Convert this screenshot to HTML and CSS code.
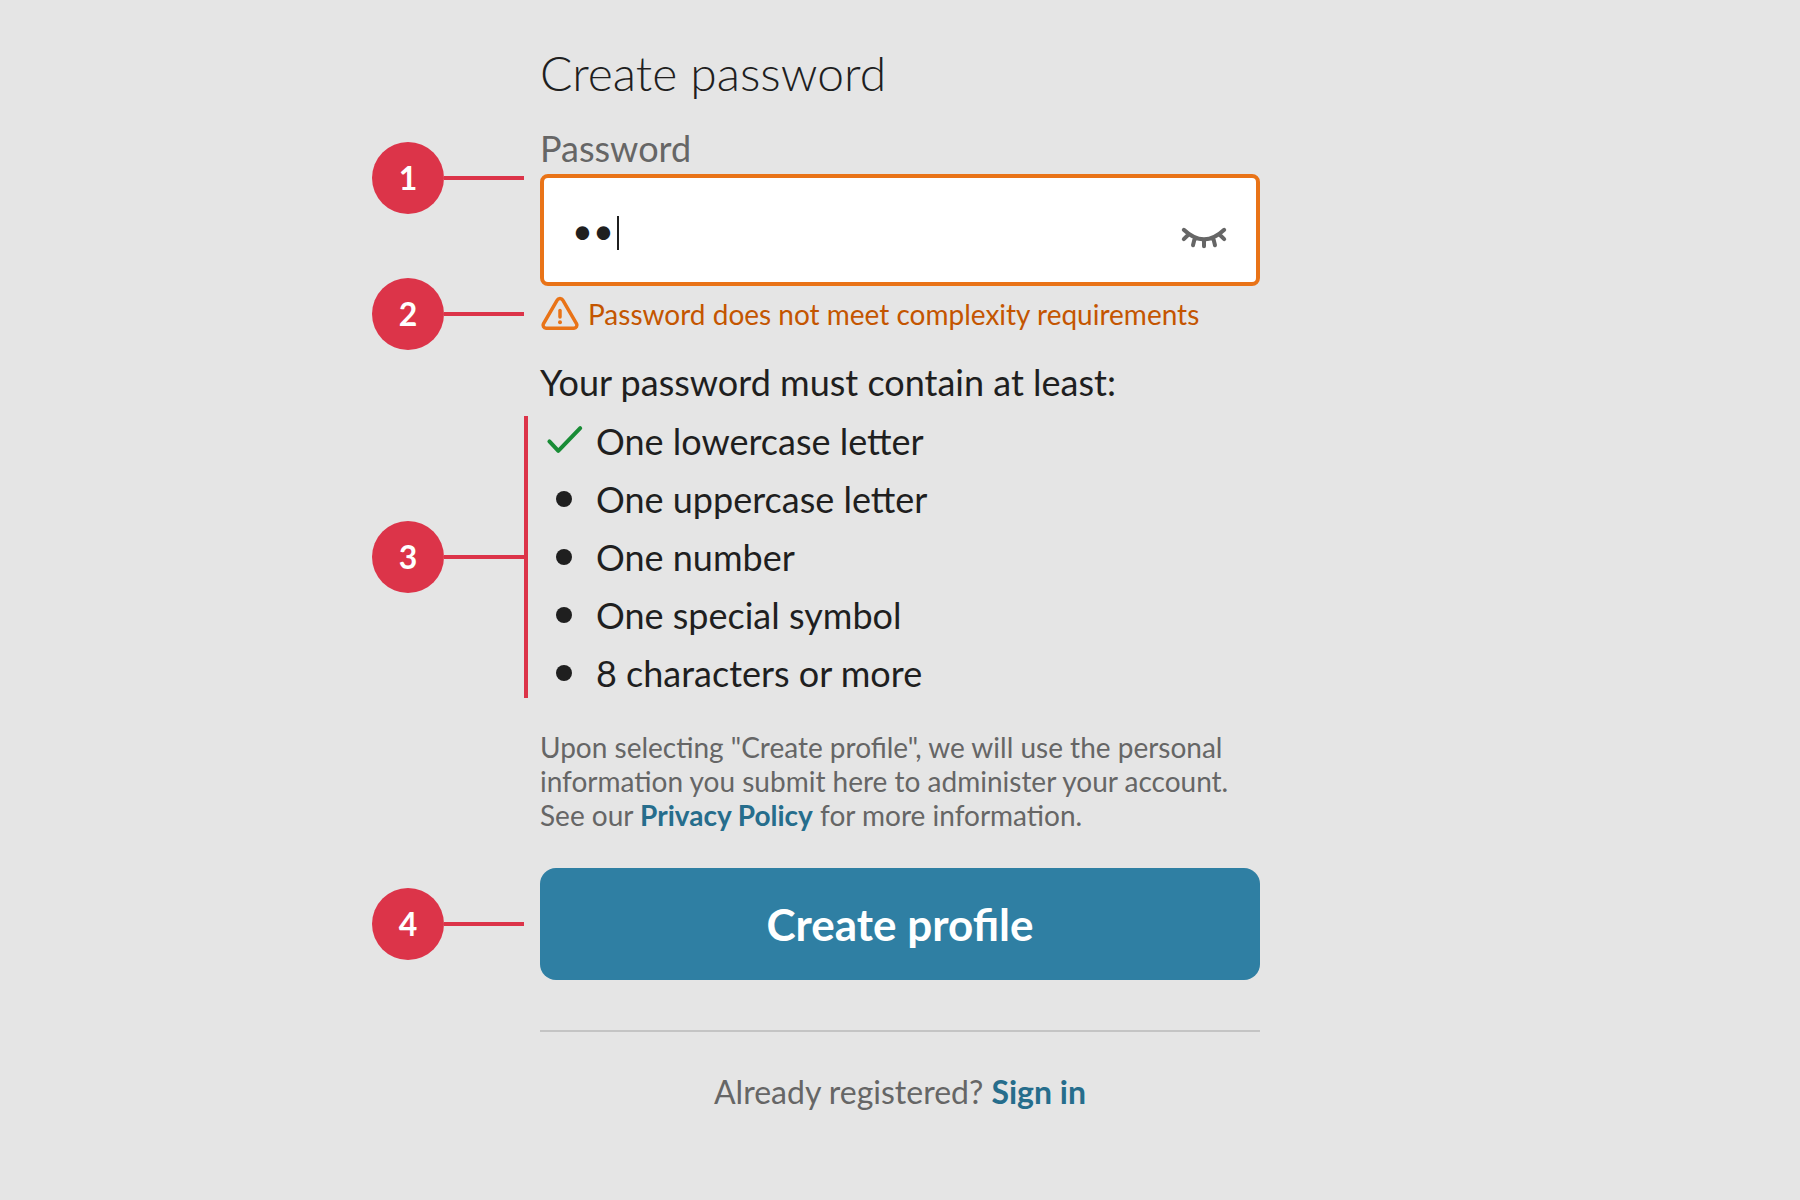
FILE: index.html
```html
<!DOCTYPE html>
<html lang="en">
<head>
    <meta charset="UTF-8">
    <meta name="viewport" content="width=device-width, initial-scale=1.0">
    <title>Create password</title>
    <link rel="stylesheet" href="styles.css">
</head>
<body>

<main>
    <h1>Create password</h1>

    <form>
        <label for="password">Password</label>
        <div class="field">
            <span class="callout callout-top">1</span>
            <input type="password" id="password" value="ab" aria-describedby="passwordError">
            <span class="caret"></span>
            <button type="button" class="toggle" aria-label="Show password">
                <svg viewBox="0 0 48 48" aria-hidden="true">
                    <path d="M3.8 23.8Q24 43 44.2 23.8M8.5 28.5L3.8 33.2M14.8 32L13 39.2M24 34V40.2M33.2 32L35 39.2M39.5 28.5L44.2 33.2"/>
                </svg>
            </button>
        </div>

        <p class="error" id="passwordError">
            <span class="callout">2</span>
            <svg viewBox="0 0 40 40" aria-hidden="true">
                <path d="M17.2 6.2a3.2 3.2 0 0 1 5.6 0L36.6 29.8a3 3 0 0 1-2.6 4.4H6a3 3 0 0 1-2.6-4.4Z"/>
                <path d="M20 16.6V23"/>
                <circle cx="20" cy="28.2" r="2"/>
            </svg>
            Password does not meet complexity requirements
        </p>

        <!-- Password rules -->
        <h2>Your password must contain at least:</h2>
        <div class="rules">
            <span class="callout">3</span>
            <ul>
                <li>
                    <svg class="check" viewBox="0 0 40 40" aria-hidden="true">
                        <path d="M5.4 20.4L14.3 29.8L36.2 7.2"/>
                    </svg>
                    One lowercase letter
                </li>
                <li><span class="dot"></span>One uppercase letter</li>
                <li><span class="dot"></span>One number</li>
                <li><span class="dot"></span>One special symbol</li>
                <li><span class="dot"></span>8 characters or more</li>
            </ul>
        </div>

        <p class="terms">Upon selecting "Create profile", we will use the personal information you submit here to administer your account. See our <a href="#privacy">Privacy Policy</a> for more information.</p>

        <div class="action">
            <span class="callout">4</span>
            <button type="submit" class="submit">Create profile</button>
        </div>
    </form>

    <p class="signin">Already registered? <a href="#signin">Sign in</a></p>
</main>

</body>
</html>
```
FILE: styles.css
```css
* {
    box-sizing: border-box;
}

body {
    margin: 0;
    padding: 44px 20px;
    font-family: Lato, "Liberation Sans", sans-serif;
    font-size: 36px;
    line-height: 44px;
    color: #1f1f1f;
    background-color: #e5e5e5;
}

main {
    max-width: 720px;
    margin: 0 auto;
}

h1, h2, p, ul {
    margin: 0;
    padding: 0;
}

h1 {
    margin-bottom: 24px;
    font-size: 48px;
    font-weight: 300;
    line-height: 58px;
}

label {
    display: block;
    margin-bottom: 4px;
    color: #666;
}

a {
    color: #266d8c;
    font-weight: bold;
    text-decoration: none;
}

a:hover {
    text-decoration: underline;
}

svg {
    display: block;
    flex: none;
    width: 40px;
    height: 40px;
    fill: none;
    stroke-width: 4;
    stroke-linecap: round;
    stroke-linejoin: round;
}

/* Password field */
.field {
    position: relative;
    display: flex;
    align-items: center;
    height: 112px;
    padding: 0 28px;
    background-color: #fff;
    border: 4px solid #e97317;
    border-radius: 8px;
}

.field input {
    flex: 1;
    min-width: 0;
    padding: 0;
    border: none;
    outline: none;
    background: none;
    color: #1f1f1f;
    font-family: inherit;
    font-size: 36px;
}

.caret {
    position: absolute;
    left: 73px;
    top: 38px;
    width: 2px;
    height: 34px;
    background-color: #1f1f1f;
}

.toggle {
    padding: 0;
    border: none;
    background: none;
    cursor: pointer;
}

.toggle svg {
    width: 48px;
    height: 48px;
    stroke: #666;
}

.error {
    position: relative;
    display: flex;
    align-items: center;
    gap: 8px;
    margin: 8px 0 26px;
    font-size: 28px;
    line-height: 34px;
    color: #c45500;
}

.error svg {
    stroke: #e97317;
    stroke-width: 3.5;
}

.error circle {
    fill: #e97317;
    stroke: none;
}

h2 {
    margin-bottom: 8px;
    font-size: 36px;
    font-weight: normal;
}

/* Rules list */
.rules {
    position: relative;
    margin-bottom: 28px;
}

.rules ul {
    list-style: none;
}

.rules li {
    display: flex;
    align-items: center;
    gap: 12px;
    height: 58px;
    padding-left: 4px;
}

.check {
    stroke: #198c36;
}

.dot {
    width: 16px;
    height: 16px;
    margin: 0 12px;
    border-radius: 50%;
    background-color: #1f1f1f;
}

.terms {
    margin-bottom: 36px;
    font-size: 28px;
    line-height: 34px;
    color: #666;
}

.action {
    position: relative;
}

.submit {
    display: block;
    width: 100%;
    height: 112px;
    border: none;
    border-radius: 16px;
    background-color: #2f7fa3;
    color: #fff;
    font-family: inherit;
    font-size: 44px;
    font-weight: bold;
    cursor: pointer;
}

.signin {
    margin-top: 50px;
    padding-top: 40px;
    border-top: 2px solid #c4c4c4;
    font-size: 32px;
    line-height: 40px;
    text-align: center;
    color: #666;
}

/* Numbered callouts beside the form */
.callout {
    position: absolute;
    right: calc(100% + 96px);
    top: 50%;
    width: 72px;
    height: 72px;
    margin-top: -36px;
    border-radius: 50%;
    background-color: #dc3449;
    color: #fff;
    font-size: 32px;
    font-weight: bold;
    line-height: 72px;
    text-align: center;
}

.callout::after {
    content: "";
    position: absolute;
    left: 100%;
    top: 34px;
    width: 80px;
    height: 4px;
    background-color: #dc3449;
}

/* sits on the field's top border */
.callout-top {
    right: calc(100% + 100px);
    top: 0;
}

.rules::before {
    content: "";
    position: absolute;
    left: -16px;
    top: 4px;
    bottom: 4px;
    width: 4px;
    background-color: #dc3449;
}
```
